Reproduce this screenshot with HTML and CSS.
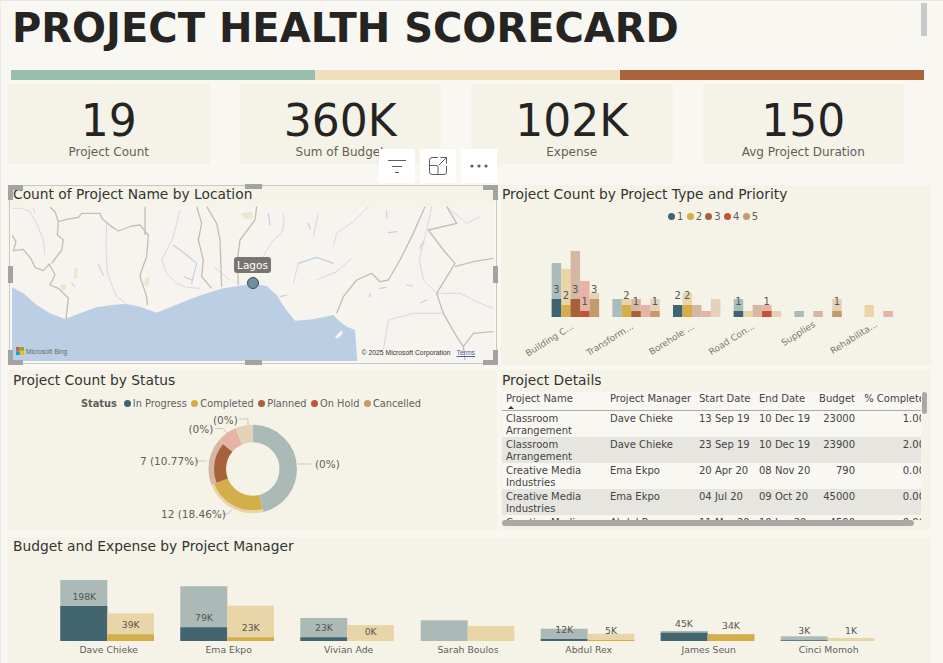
FILE: index.html
```html
<!DOCTYPE html>
<html lang="en">
<head>
<meta charset="utf-8">
<title>Project Health Scorecard</title>
<link rel="stylesheet" href="styles.css">
</head>
<body>
<div class="report">
  <h1 class="page-title">PROJECT HEALTH SCORECARD</h1>
  <div class="stripe"><span class="seg seg-a"></span><span class="seg seg-b"></span><span class="seg seg-c"></span></div>

  <div class="kpis">
    <div class="kpi"><div class="kpi-value">19</div><div class="kpi-label">Project Count</div></div>
    <div class="kpi"><div class="kpi-value">360K</div><div class="kpi-label">Sum of Budget</div></div>
    <div class="kpi"><div class="kpi-value">102K</div><div class="kpi-label">Expense</div></div>
    <div class="kpi"><div class="kpi-value">150</div><div class="kpi-label">Avg Project Duration</div></div>
  </div>

  <div class="grid">
    <section class="panel map-panel">
      <h2 class="panel-title top-title map-title">Count of Project Name by Location</h2>
      <div class="map">
        <svg class="map-svg" viewBox="36 78 1446 465" width="482" height="155" aria-hidden="true">
          <rect class="land" x="36" y="78" width="1446" height="465"/>
          <path class="sea" d="M36 322L70 340 110 375 150 400 195 417 240 400 290 382 340 374 380 372 420 380 470 398 520 378 570 358 620 340 670 325 720 317 760 312 800 318 830 345 855 385 885 422 940 418 1000 405 1020 425 1040 440 1065 450 1072 543 36 543Z"/>
          <path class="green" d="M722 100L755 95 760 115 735 118ZM222 265L232 265 232 295 222 295ZM180 315L200 312 198 330 185 330ZM435 295L450 290 445 318 432 318Z"/>
          <path class="pink" d="M36 85L65 85 90 95 110 130 130 180 135 225M320 130L318 200 322 280 350 350 380 372M540 90L530 130 520 170 485 240 500 280 530 310 560 322 600 325M850 100L852 130 845 160 820 180 800 210 780 250M1105 80L1060 125 1010 160 1000 200M895 250L880 310M1295 80L1280 150 1258 240 1270 300 1310 340M1310 340L1380 340 1430 365 1480 385M1165 420L1150 510M1165 420L1240 400 1330 400M955 100L940 170M640 260L690 300M950 300L1010 275 1055 235M1345 85L1400 130 1440 110M100 85L105 100"/>
          <path class="river" d="M520 195L540 210 560 225 590 250 582 280 575 310M552 290L575 300M295 255L310 285M215 310L225 320M805 100L810 135M925 130L930 145M1160 95L1160 115M1165 158L1190 155M1270 185L1260 205M1140 325L1158 322M1110 340L1108 350M1220 315L1238 318M1262 368L1280 360M895 250L950 232 1000 250M840 350L860 345"/>
          <path class="island" d="M1005 470L1025 450 1028 462 1012 476Z"/>
          <path class="border" d="M36 165L48 185 40 212 70 208 92 235 105 262 130 272 148 252 165 285 150 315 175 325 205 355 198 417M150 82L165 95 175 125 200 118 235 112 245 100 300 100 305 115 335 140 355 153 395 138 420 135 445 165 440 230 425 270 420 290 440 350 442 375M175 125L172 165 190 180 185 210 155 250M435 80L435 165M590 80L605 130 595 180 610 240 605 290 635 325M620 80L650 130 660 180 665 320M770 80L765 120 720 180 712 240 715 315M1275 80L1240 160 1200 240 1165 300 1140 305 1115 280 1070 300 1030 350 1010 400M1340 80L1370 130 1285 150 1330 210 1365 250 1310 340 1330 400 1370 470 1390 500 1395 540M1365 260L1420 245 1480 235M1390 500L1420 460 1480 455"/>
        </svg>
        <span class="map-label">Lagos</span>
        <span class="map-pin"></span>
        <div class="bing">
          <svg class="bing-logo" viewBox="0 0 8 8" width="8" height="8" aria-hidden="true">
            <rect x="0" y="0" width="3.8" height="3.8" fill="#f25022"/>
            <rect x="4.2" y="0" width="3.8" height="3.8" fill="#7fba00"/>
            <rect x="0" y="4.2" width="3.8" height="3.8" fill="#00a4ef"/>
            <rect x="4.2" y="4.2" width="3.8" height="3.8" fill="#ffb900"/>
          </svg>
          <span>Microsoft Bing</span>
        </div>
        <div class="copyright"><span>© 2025 Microsoft Corporation</span><a class="terms">Terms</a></div>
      </div>

      <div class="frame"></div>
      <span class="handle corner tl"></span><span class="handle corner tr"></span>
      <span class="handle corner bl"></span><span class="handle corner br"></span>
      <span class="handle hbar top"></span><span class="handle hbar bottom"></span>
      <span class="handle vbar left"></span><span class="handle vbar right"></span>

      <div class="toolbar">
        <div class="tool">
          <svg viewBox="0 0 20 16" width="20" height="16" aria-hidden="true"><path class="tool-line" d="M1 2.500H19M5 8.500H15M8 14.500H12"/></svg>
        </div>
        <div class="tool">
          <svg viewBox="0 0 20 20" width="20" height="20" aria-hidden="true"><path class="tool-line" d="M10 1.500H4A2.500 2.500 0 0 0 1.500 4V16A2.500 2.500 0 0 0 4 18.500H16A2.500 2.500 0 0 0 18.500 16V10M1.500 9.500H8A2 2 0 0 1 10 11.500V18.500M10.500 9.500L18.500 1.500M12.500 1.500H18.500V7.500"/></svg>
        </div>
        <div class="tool">
          <svg viewBox="0 0 18 4" width="18" height="4" aria-hidden="true"><circle class="tool-dot" cx="2" cy="2" r="1.600"/><circle class="tool-dot" cx="9" cy="2" r="1.600"/><circle class="tool-dot" cx="16" cy="2" r="1.600"/></svg>
        </div>
      </div>
    </section>

    <section class="panel">
      <h2 class="panel-title top-title">Project Count by Project Type and Priority</h2>
      <div class="legend legend-type">
        <span class="key"><i class="dot teal"></i>1</span>
        <span class="key"><i class="dot yellow"></i>2</span>
        <span class="key"><i class="dot brown"></i>3</span>
        <span class="key"><i class="dot red"></i>4</span>
        <span class="key"><i class="dot tan"></i>5</span>
      </div>
      <svg class="chart" viewBox="501 226 430 139" width="430" height="139" role="img" aria-label="Project count by type and priority">
        <g class="pale-bars">
          <rect class="p-teal" x="551.7" y="263" width="9.500" height="54"/><rect class="p-yellow" x="561.2" y="269" width="9.500" height="48"/><rect class="p-brown" x="570.6" y="251" width="9.500" height="66"/><rect class="p-red" x="580.1" y="281" width="9.500" height="36"/><rect class="p-tan" x="589.6" y="293" width="9.500" height="24"/>
          <rect class="p-teal" x="612.4" y="299" width="9.500" height="18"/><rect class="p-yellow" x="621.8" y="299" width="9.500" height="18"/><rect class="p-brown" x="631.3" y="299" width="9.500" height="18"/><rect class="p-red" x="640.8" y="305" width="9.500" height="12"/><rect class="p-tan" x="650.2" y="299" width="9.500" height="18"/>
          <rect class="p-yellow" x="682.5" y="293" width="9.500" height="24"/><rect class="p-brown" x="692" y="305" width="9.500" height="12"/><rect class="p-red" x="701.4" y="311" width="9.500" height="6"/><rect class="p-tan" x="710.9" y="299" width="9.500" height="18"/>
          <rect class="p-teal" x="733.7" y="299" width="9.500" height="18"/><rect class="p-yellow" x="743.2" y="311" width="9.500" height="6"/><rect class="p-brown" x="752.6" y="305" width="9.500" height="12"/><rect class="p-red" x="762.1" y="305" width="9.500" height="12"/><rect class="p-tan" x="771.6" y="311" width="9.500" height="6"/>
          <rect class="p-teal" x="794.4" y="311" width="9.500" height="6"/><rect class="p-brown" x="813.3" y="311" width="9.500" height="6"/><rect class="p-tan" x="832.2" y="299" width="9.500" height="18"/>
          <rect class="p-yellow" x="864.5" y="305" width="9.500" height="12"/><rect class="p-red" x="883.4" y="311" width="9.500" height="6"/>
        </g>
        <g class="solid-bars">
          <rect class="s-teal" x="551.7" y="299" width="9.500" height="18"/><rect class="s-yellow" x="561.2" y="305" width="9.500" height="12"/><rect class="s-brown" x="570.6" y="299" width="9.500" height="18"/><rect class="s-red" x="580.1" y="311" width="9.500" height="6"/><rect class="s-tan" x="589.6" y="299" width="9.500" height="18"/>
          <rect class="s-yellow" x="621.8" y="305" width="9.500" height="12"/><rect class="s-brown" x="631.3" y="311" width="9.500" height="6"/><rect class="s-tan" x="650.2" y="311" width="9.500" height="6"/>
          <rect class="s-teal" x="673" y="305" width="9.500" height="12"/><rect class="s-yellow" x="682.5" y="305" width="9.500" height="12"/>
          <rect class="s-teal" x="733.7" y="311" width="9.500" height="6"/><rect class="s-red" x="762.1" y="311" width="9.500" height="6"/>
          <rect class="s-tan" x="832.2" y="311" width="9.500" height="6"/>
        </g>
        <g class="bar-label">
          <text x="556.4" y="289">3</text><text x="566" y="295">2</text><text x="575.3" y="289">3</text><text x="584.8" y="301">1</text><text x="594.3" y="289">3</text>
          <text x="626.5" y="295">2</text><text x="636" y="301">1</text><text x="655" y="301">1</text>
          <text x="677.7" y="295">2</text><text x="687.2" y="295">2</text>
          <text x="738.4" y="301">1</text><text x="766.8" y="301">1</text>
          <text x="837" y="301">1</text>
        </g>
        <g class="axis-label">
          <text transform="translate(574 328) rotate(-32)">Building C...</text>
          <text transform="translate(634 328) rotate(-32)">Transform...</text>
          <text transform="translate(695 328) rotate(-32)">Borehole ...</text>
          <text transform="translate(755 328) rotate(-32)">Road Con...</text>
          <text transform="translate(816 326) rotate(-32)">Supplies</text>
          <text transform="translate(878 326) rotate(-32)">Rehabilita...</text>
        </g>
      </svg>
    </section>

    <section class="panel status-panel">
      <h2 class="panel-title">Project Count by Status</h2>
      <div class="legend legend-status">
        <b class="legend-name">Status</b>
        <span class="key"><i class="dot teal"></i>In Progress</span>
        <span class="key"><i class="dot yellow"></i>Completed</span>
        <span class="key"><i class="dot brown"></i>Planned</span>
        <span class="key"><i class="dot red"></i>On Hold</span>
        <span class="key"><i class="dot tan"></i>Cancelled</span>
      </div>
      <svg class="chart" viewBox="8 413 489 117" width="489" height="117" role="img" aria-label="Project count by status">
        <g class="donut" transform="rotate(-90 252.7 469)">
          <circle class="r-teal" cx="252.7" cy="469" r="35.500" stroke-width="17.600" pathLength="360" stroke-dasharray="166 360"/>
          <circle class="r-yellow" cx="252.7" cy="469" r="35.500" stroke-width="17.600" pathLength="360" stroke-dasharray="83 360" stroke-dashoffset="-166"/>
          <circle class="r-brown" cx="252.7" cy="469" r="35.500" stroke-width="17.600" pathLength="360" stroke-dasharray="61 360" stroke-dashoffset="-249"/>
          <circle class="r-red" cx="252.7" cy="469" r="35.500" stroke-width="17.600" pathLength="360" stroke-dasharray="27 360" stroke-dashoffset="-310"/>
          <circle class="r-tan" cx="252.7" cy="469" r="35.500" stroke-width="17.600" pathLength="360" stroke-dasharray="23 360" stroke-dashoffset="-337"/>
          <circle class="c-yellow" cx="252.7" cy="469" r="34" stroke-width="14.600" pathLength="360" stroke-dasharray="83 360" stroke-dashoffset="-166"/>
          <circle class="c-brown" cx="252.7" cy="469" r="32.700" stroke-width="12" pathLength="360" stroke-dasharray="61 360" stroke-dashoffset="-249"/>
        </g>
        <path class="leader" d="M298 464H311M194.500 461H207M220 514H227L232 510M215 428.500H223L227 433M239 419H248V425"/>
        <g class="donut-label">
          <text x="315" y="464">(0%)</text>
          <text x="140" y="461">7 (10.77%)</text>
          <text x="161" y="514">12 (18.46%)</text>
          <text x="188.500" y="428.500">(0%)</text>
          <text x="213" y="419.500">(0%)</text>
        </g>
      </svg>
    </section>

    <section class="panel details-panel">
      <h2 class="panel-title">Project Details</h2>
      <div class="table-wrap">
        <table class="details">
          <colgroup><col class="c1"><col class="c2"><col class="c3"><col class="c4"><col class="c5"><col class="c6"></colgroup>
          <thead>
            <tr><th class="sorted">Project Name</th><th>Project Manager</th><th>Start Date</th><th>End Date</th><th class="num">Budget</th><th class="num">% Complete</th></tr>
          </thead>
          <tbody>
            <tr><td>Classroom Arrangement</td><td>Dave Chieke</td><td>13 Sep 19</td><td>10 Dec 19</td><td class="num">23000</td><td class="num">1.00</td></tr>
            <tr><td>Classroom Arrangement</td><td>Dave Chieke</td><td>23 Sep 19</td><td>10 Dec 19</td><td class="num">23900</td><td class="num">2.00</td></tr>
            <tr><td>Creative Media Industries</td><td>Ema Ekpo</td><td>20 Apr 20</td><td>08 Nov 20</td><td class="num">790</td><td class="num">0.00</td></tr>
            <tr><td>Creative Media Industries</td><td>Ema Ekpo</td><td>04 Jul 20</td><td>09 Oct 20</td><td class="num">45000</td><td class="num">0.00</td></tr>
            <tr><td>Creative Media Industries</td><td>Abdul Rex</td><td>11 Mar 20</td><td>10 Jun 20</td><td class="num">4500</td><td class="num">0.00</td></tr>
          </tbody>
        </table>
      </div>
      <span class="scroll scroll-v"></span>
      <span class="scroll scroll-h"></span>
    </section>
  </div>

  <section class="panel budget-panel">
    <h2 class="panel-title">Budget and Expense by Project Manager</h2>
    <svg class="chart" viewBox="8 559 923 104" width="923" height="104" role="img" aria-label="Budget and expense by project manager">
      <g>
        <rect class="p-teal2" x="60.300" y="580" width="47" height="61"/><rect class="s-teal2" x="60.300" y="606" width="47" height="35"/><rect class="p-yellow" x="107.300" y="613.300" width="46.700" height="27.700"/><rect class="s-yellow" x="107.300" y="634.300" width="46.700" height="6.700"/>
        <rect class="p-teal2" x="180.300" y="586.300" width="47" height="54.700"/><rect class="s-teal2" x="180.300" y="627.300" width="47" height="13.700"/><rect class="p-yellow" x="227.300" y="605.700" width="46.700" height="35.300"/><rect class="s-yellow" x="227.300" y="637.300" width="46.700" height="3.700"/>
        <rect class="p-teal2" x="300.300" y="618" width="47" height="23"/><rect class="s-teal2" x="300.300" y="637.300" width="47" height="3.700"/><rect class="p-yellow" x="347.300" y="625" width="46.700" height="16"/>
        <rect class="p-teal2" x="420.700" y="620.300" width="47" height="20.700"/><rect class="p-yellow" x="467.700" y="626" width="46.700" height="15"/>
        <rect class="p-teal2" x="540.700" y="628.700" width="47" height="12.300"/><rect class="s-teal2" x="540.700" y="639" width="47" height="2"/><rect class="p-yellow" x="587.700" y="633.700" width="46.700" height="7.300"/><rect class="s-yellow" x="587.700" y="640" width="46.700" height="1"/>
        <rect class="p-teal2" x="660.700" y="631" width="47" height="10"/><rect class="s-teal2" x="660.700" y="632.700" width="47" height="8.300"/><rect class="p-yellow" x="707.700" y="634" width="46.700" height="7"/><rect class="s-yellow" x="707.700" y="634.300" width="46.700" height="6.700"/>
        <rect class="p-teal2" x="780.700" y="636.300" width="47" height="4.700"/><rect class="s-teal2" x="780.700" y="640.300" width="47" height="0.700"/><rect class="p-yellow" x="827.700" y="638" width="46.700" height="3"/>
      </g>
      <g class="bar-label budget-label">
        <text x="84.300" y="596.700">198K</text><text x="130.700" y="624.700">39K</text>
        <text x="204" y="617.700">79K</text><text x="250.700" y="627.300">23K</text>
        <text x="324" y="627.300">23K</text><text x="370.700" y="631.700">0K</text>
        <text x="564.300" y="629.300">12K</text><text x="611" y="630.300">5K</text>
        <text x="684" y="623.700">45K</text><text x="731" y="625.700">34K</text>
        <text x="804.300" y="630.300">3K</text><text x="851" y="630.300">1K</text>
      </g>
      <g class="name-label">
        <text x="108.700" y="649.500">Dave Chieke</text>
        <text x="228.700" y="649.500">Ema Ekpo</text>
        <text x="348.700" y="649.500">Vivian Ade</text>
        <text x="468" y="649.500">Sarah Boulos</text>
        <text x="588.700" y="649.500">Abdul Rex</text>
        <text x="708.700" y="649.500">James Seun</text>
        <text x="828.700" y="649.500">Cinci Momoh</text>
      </g>
    </svg>
  </section>

  <span class="page-scroll"></span>
</div>
</body>
</html>
```
FILE: styles.css
```css
* { box-sizing: border-box; }
html, body { margin: 0; padding: 0; }
body {
  width: 943px;
  height: 663px;
  overflow: hidden;
  background: #f8f7f2;
  font-family: "DejaVu Sans", sans-serif;
  color: #252423;
}
.report {
  position: relative;
  height: 663px;
  padding: 0 12px 0 8px;
  border-top: 1px solid #e6e6e4;
  border-left: 1px solid #ecebe8;
  overflow: hidden;
}
.page-title {
  margin: 0 0 0 3px;
  font-size: 40px;
  font-weight: 700;
  line-height: 55px;
  height: 55px;
  white-space: nowrap;
}
.stripe { display: flex; width: 913px; height: 10px; margin: 14px 0 0 2px; }
.seg { flex: 1; }
.seg-a { background: #97bfae; }
.seg-b { background: #eee0bd; }
.seg-c { background: #a8643a; }

.kpis { display: flex; gap: 30px; margin: 4px 0 0 -1px; }
.kpi { width: 201.500px; height: 80px; background: #f5f3e8; text-align: center; }
.kpi-value { font-size: 44px; line-height: 50px; padding-top: 12px; height: 60px; }
.kpi-label { font-size: 12px; line-height: 17px; color: #605e5c; }

.grid {
  display: grid;
  grid-template-columns: 489px 430px;
  grid-template-rows: 180px 160px;
  column-gap: 4px;
  row-gap: 5px;
  margin: 21px 0 0 -1px;
}
.panel { position: relative; background: #f5f3e8; }
.panel-title {
  margin: 0;
  padding-left: 1px;
  font-size: 13.800px;
  font-weight: 400;
  line-height: 21px;
  height: 21px;
  color: #333;
  white-space: nowrap;
}
.top-title { line-height: 19px; }
.status-panel .panel-title, .budget-panel .panel-title { padding-left: 5px; }
.chart { display: block; }

.map-panel { background: #f8f7f2; }
.map-title { padding-left: 5px; margin: 0 2px 0 0; background: #f5f3e8; }
.map { position: relative; width: 482px; height: 155px; margin-left: 4px; overflow: hidden; }
.map-svg { display: block; }
.land { fill: #f7f3ef; }
.sea { fill: #bbcfe4; }
.green { fill: #e3ead2; }
.island { fill: #f7f3ef; }
.border { fill: none; stroke: #c2beb7; stroke-width: 4; stroke-linejoin: round; }
.pink { fill: none; stroke: #e6d0e6; stroke-width: 3; stroke-linejoin: round; }
.river { fill: none; stroke: #bdd2e6; stroke-width: 3.500; stroke-linecap: round; stroke-linejoin: round; }
.map-label {
  position: absolute;
  left: 222px;
  top: 51px;
  width: 37px;
  height: 16px;
  border-radius: 3px;
  background: #777572;
  color: #fff;
  font-size: 10.500px;
  line-height: 16px;
  text-align: center;
}
.map-pin {
  position: absolute;
  left: 234.500px;
  top: 71px;
  width: 12px;
  height: 12px;
  border-radius: 50%;
  background: #6f8f9f;
  border: 1px solid #2f4f5f;
}
.bing {
  position: absolute;
  left: 4px;
  top: 141px;
  display: flex;
  align-items: center;
  gap: 2px;
  font-family: "Liberation Sans", sans-serif;
  font-size: 6.500px;
  color: #666;
}
.bing-logo { display: block; }
.copyright {
  position: absolute;
  right: 19px;
  top: 142px;
  display: flex;
  gap: 6px;
  font-family: "Liberation Sans", sans-serif;
  font-size: 6.800px;
  line-height: 9px;
  color: #333;
}
.terms { color: #4a5fa8; text-decoration: underline; }

.frame {
  position: absolute;
  left: 1px;
  top: 0;
  width: 488px;
  height: 179px;
  border: 1px solid #c9c8c0;
  pointer-events: none;
}
.handle { position: absolute; }
.corner { width: 15px; height: 15px; border: 0 solid #a3a3a3; }
.tl { left: 0; top: 0; border-width: 5px 0 0 5px; }
.tr { right: -1px; top: 0; border-width: 5px 5px 0 0; }
.bl { left: 0; bottom: 0; border-width: 0 0 5px 5px; }
.br { right: -1px; bottom: 0; border-width: 0 5px 5px 0; }
.hbar { left: 237px; width: 17px; height: 5px; background: #a3a3a3; }
.hbar.top { top: -1px; }
.hbar.bottom { bottom: 0; }
.vbar { top: 81px; width: 5px; height: 17px; background: #a3a3a3; }
.vbar.left { left: 0; }
.vbar.right { right: -1px; }

.toolbar { position: absolute; left: 371px; top: -36px; display: flex; gap: 5px; z-index: 2; }
.tool { width: 36px; height: 34px; background: #fff; display: flex; align-items: center; justify-content: center; }
.tool-line { fill: none; stroke: #605e5c; stroke-width: 1; }
.tool-dot { fill: #605e5c; }

.legend { display: flex; align-items: center; justify-content: center; height: 20px; font-size: 10px; color: #605e5c; white-space: nowrap; }
.key { display: inline-flex; align-items: center; gap: 2px; }
.dot { width: 7px; height: 7px; border-radius: 50%; display: inline-block; }
.teal { background: #3e6473; }
.yellow { background: #d4ae4b; }
.brown { background: #a6623a; }
.red { background: #c1533a; }
.tan { background: #c29a6c; }
.legend-type { gap: 3.300px; padding-right: 6px; }
.legend-status { gap: 4.500px; margin-top: 2px; padding-right: 3px; font-size: 9.800px; }
.legend-name { color: #605e5c; margin-right: 2.500px; }

.p-teal { fill: #abbdbb; }
.p-teal2 { fill: #abbab6; }
.p-yellow { fill: #e8d6a8; }
.p-brown { fill: #d6b7a3; }
.p-red { fill: #e6b3a6; }
.p-tan { fill: #e3d2b8; }
.s-teal { fill: #3e6473; }
.s-teal2 { fill: #42656f; }
.s-yellow { fill: #d4ae4b; }
.s-brown { fill: #a6623a; }
.s-red { fill: #c1533a; }
.s-tan { fill: #c29a6c; }
.bar-label text { font-size: 10px; fill: #555; text-anchor: middle; dominant-baseline: central; }
.budget-label text { font-size: 9.300px; }
.axis-label text { font-size: 9px; fill: #777; text-anchor: end; }
.name-label text { font-size: 9.300px; fill: #605e5c; text-anchor: middle; dominant-baseline: central; }

.donut circle { fill: none; }
.r-teal { stroke: #abbab6; }
.r-yellow { stroke: #e8d6a8; }
.r-brown { stroke: #d6b7a3; }
.r-red { stroke: #e6b3a6; }
.r-tan { stroke: #e3d2b8; }
.c-yellow { stroke: #d4ae4b; }
.c-brown { stroke: #a6623a; }
.leader { fill: none; stroke: #c8c7c0; stroke-width: 1; }
.donut-label text { font-size: 10.500px; fill: #605e5c; dominant-baseline: central; }

.table-wrap { width: 419px; height: 128px; margin: 1px 0 0 1px; overflow: hidden; }
.details { table-layout: fixed; width: 423px; border-collapse: collapse; font-size: 10px; line-height: 12px; color: #444; }
.c1 { width: 104px; }
.c2 { width: 89px; }
.c3 { width: 60px; }
.c4 { width: 60px; }
.c5 { width: 43px; }
.c6 { width: 67px; }
.details th {
  position: relative;
  height: 18px;
  padding: 0 0 3px 4px;
  font-weight: 400;
  text-align: left;
  white-space: nowrap;
  background: #f8f7f2;
  border-bottom: 1px solid #aaa;
}
.details td { height: 26px; padding: 2px 0 0 4px; vertical-align: top; background: #f8f7f2; }
.details tbody tr:nth-child(even) td { background: #e6e5df; }
.details .num { text-align: right; padding-right: 3px; padding-left: 0; }
.details th.num:last-child { padding-right: 0; }
.details td.num:last-child { padding-right: 0; }
.sorted::after {
  content: "";
  position: absolute;
  left: 6px;
  bottom: 1px;
  border-left: 3px solid transparent;
  border-right: 3px solid transparent;
  border-bottom: 3px solid #333;
}
.scroll { position: absolute; background: #a9a8a4; border-radius: 3px; }
.scroll-v { left: 421px; top: 22px; width: 5px; height: 22px; }
.scroll-h { left: 1px; top: 150px; width: 412px; height: 6px; }

.budget-panel { height: 126px; margin: 7px 0 0 -1px; width: 923px; }
.budget-panel .panel-title { height: 22px; line-height: 18px; }

.page-scroll { position: absolute; left: 920px; top: 2px; width: 6px; height: 33px; background: #c9c9c9; }
```
